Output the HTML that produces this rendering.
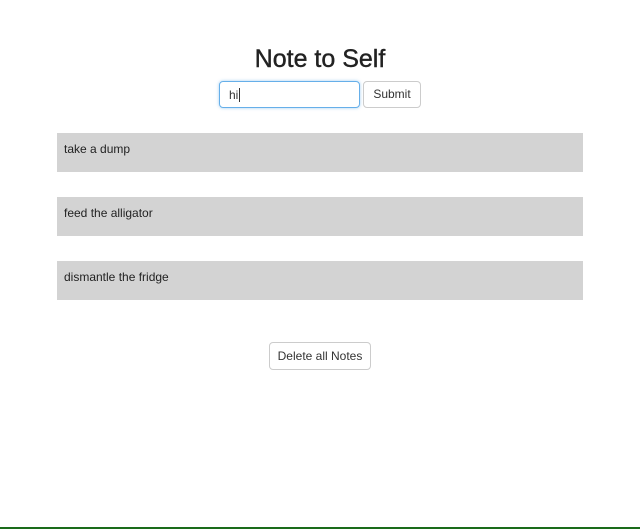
<!DOCTYPE html>
<html><head><style>
body{margin:0;width:640px;height:529px;background:#fff;font-family:"Liberation Sans",sans-serif;color:#333;position:relative;overflow:hidden}
.a{position:absolute;box-sizing:border-box}
h1{position:absolute;left:0;width:640px;top:45px;margin:0;text-align:center;font-size:25px;font-weight:normal;color:#222;-webkit-text-stroke:0.4px #222}
.btn{border:1px solid #ccc;border-radius:4px;background:#fff;font-size:12px;color:#333;text-align:center}
.note{left:57px;width:526px;height:39px;background:#d3d3d3;font-size:12px;padding:9px 7px;color:#222}
</style></head><body>
<h1>Note to Self</h1>
<div class="a" style="left:219px;top:81px;width:141px;height:27px;border:1px solid #66afe9;border-radius:4px;box-shadow:0 0 3px rgba(102,175,233,.6);font-size:12px;padding:6px 9px;color:#333">hi<span style="border-left:1px solid #333;margin-left:1px"></span></div>
<div class="a btn" style="left:363px;top:81px;width:58px;height:27px;line-height:25px">Submit</div>
<div class="a note" style="top:133px">take a dump</div>
<div class="a note" style="top:197px">feed the alligator</div>
<div class="a note" style="top:261px">dismantle the fridge</div>
<div class="a btn" style="left:269px;top:342px;width:102px;height:28px;line-height:26px">Delete all Notes</div>
<div class="a" style="left:0;top:527px;width:640px;height:2px;background:#1a6b1a"></div>
</body></html>
